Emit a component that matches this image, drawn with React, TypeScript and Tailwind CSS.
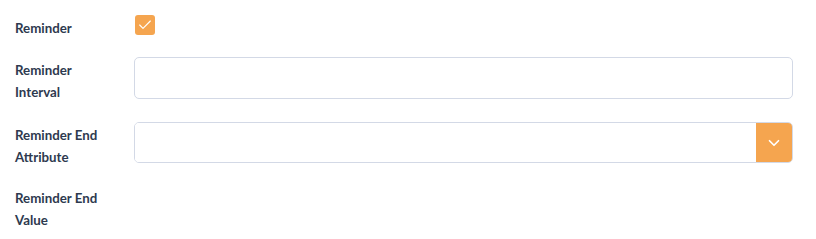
import { ChevronDown, Check } from "lucide-react"

const labelCls =
  "w-[119px] shrink-0 pt-[2px] text-[13.3px] leading-[22px] font-bold text-[#2e3a4f]"

export default function App() {
  return (
    <div className="min-h-[239px] bg-white pl-[15px] pr-[23px] pt-[15px] font-['Lato',_'Liberation_Sans',_sans-serif]">
      <div className="mb-[18px] flex items-start">
        <div className={labelCls}>Reminder</div>
        <div className="ml-px flex h-5 w-5 items-center justify-center rounded-[3px] bg-[#f5a54f]">
          <Check className="h-4 w-4 text-white" strokeWidth={1.75} />
        </div>
      </div>

      <div className="mb-[19px] flex items-start">
        <div className={labelCls}>
          Reminder
          <br />
          Interval
        </div>
        <input
          type="text"
          className="h-[42px] flex-1 rounded-[5px] border border-[#d3d9e6] bg-white px-3 outline-none"
        />
      </div>

      <div className="mb-[17px] flex items-start">
        <div className={labelCls}>
          Reminder End
          <br />
          Attribute
        </div>
        <div className="flex h-[41px] flex-1 overflow-hidden rounded-[5px] border border-[#d3d9e6]">
          <div className="flex-1 bg-white" />
          <div className="flex w-9 items-center justify-center bg-[#f5a54f]">
            <ChevronDown className="h-[18px] w-[18px] text-white" strokeWidth={2.25} />
          </div>
        </div>
      </div>

      <div className="flex items-start">
        <div className={labelCls}>
          Reminder End
          <br />
          Value
        </div>
      </div>
    </div>
  )
}
